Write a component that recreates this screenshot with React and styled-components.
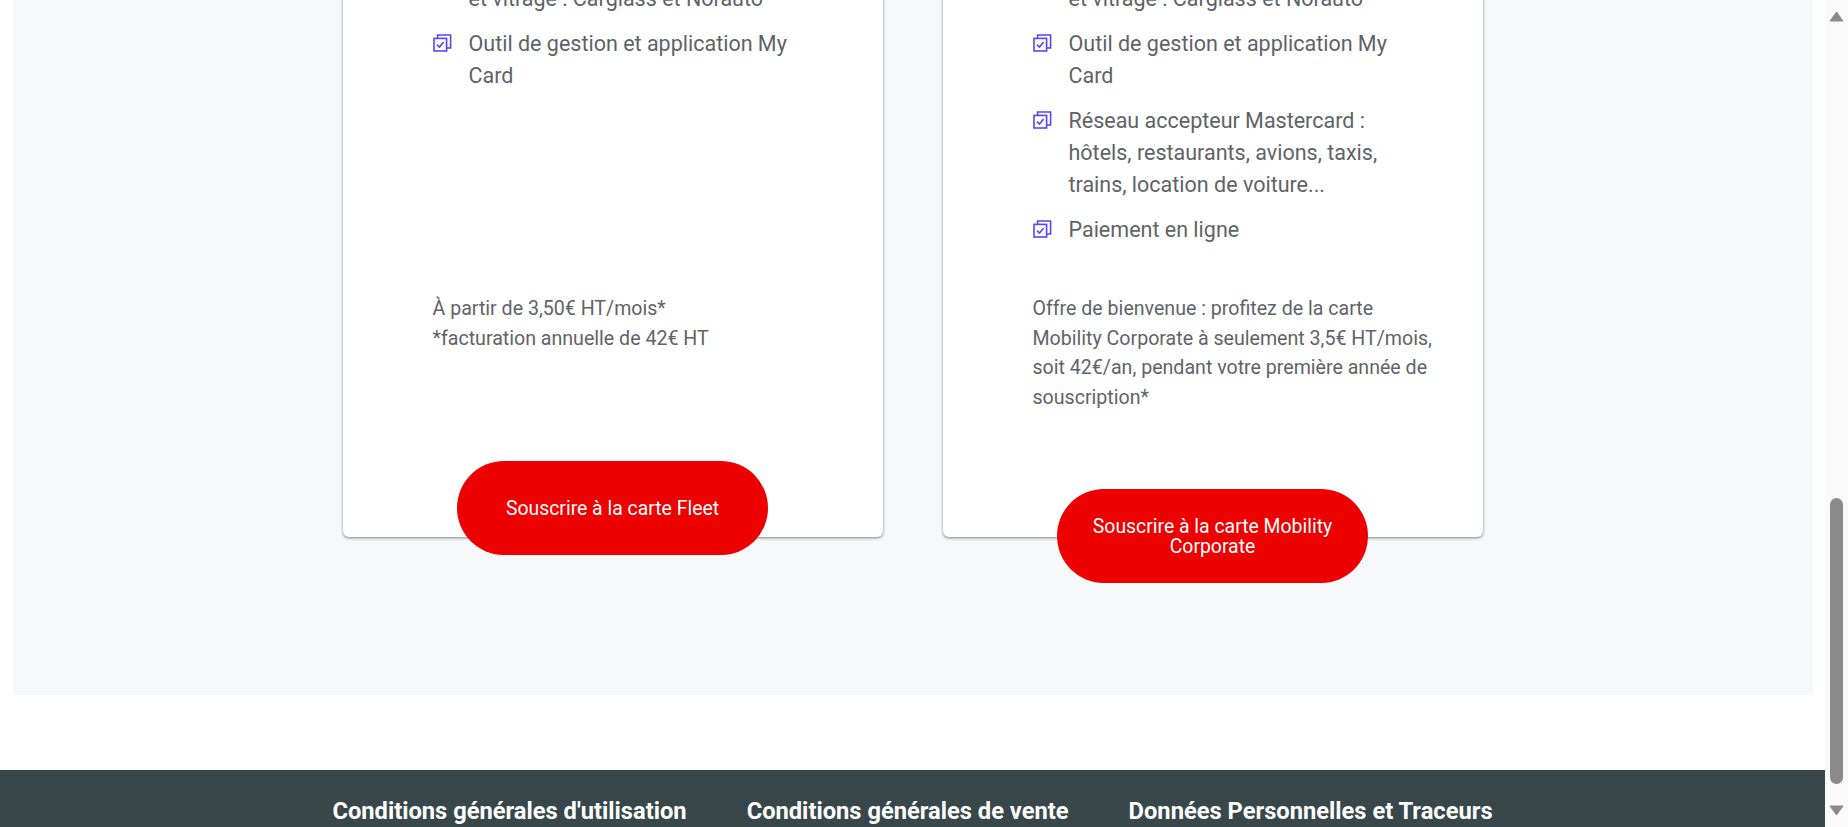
import React, { useLayoutEffect, useRef } from 'react';
import styled, { createGlobalStyle } from 'styled-components';

const GlobalStyle = createGlobalStyle`
  html, body {
    margin: 0;
    padding: 0;
    background: #ffffff;
    font-family: Roboto, "Liberation Sans", Arial, sans-serif;
    -webkit-font-smoothing: antialiased;
  }
  * { box-sizing: border-box; }
`;

const Page = styled.div`
  display: flex;
  flex-direction: column;
  min-height: 100vh;
  margin-right: 23px;
`;

const Header = styled.header`
  height: 88px;
  display: flex;
  align-items: center;
  justify-content: space-between;
  padding: 0 64px;
  border-bottom: 1px solid #e6e8eb;
`;

const Brand = styled.div`
  font-size: 26px;
  font-weight: 700;
  color: #37474a;
`;

const Nav = styled.nav`
  display: flex;
  gap: 36px;
  font-size: 17px;
  color: #37474a;
`;

const Hero = styled.section`
  min-height: 720px;
  padding: 120px 0 0;
  display: flex;
  flex-direction: column;
  align-items: center;
  text-align: center;
`;

const HeroTitle = styled.h1`
  margin: 0 0 24px;
  font-size: 44px;
  font-weight: 700;
  color: #37474a;
`;

const HeroText = styled.p`
  margin: 0;
  max-width: 760px;
  font-size: 20px;
  line-height: 32px;
  color: #5f6368;
`;

const Offers = styled.section`
  width: 100%;
  max-width: 1800px;
  margin: 0 auto 75px;
  padding: 80px 0 158px;
  background: #f7f8fa;
`;

const OffersTitle = styled.h2`
  margin: 0 0 60px;
  text-align: center;
  font-size: 34px;
  font-weight: 700;
  color: #37474a;
`;

const CardsRow = styled.div`
  display: grid;
  grid-template-columns: repeat(2, 540px);
  justify-content: center;
  gap: 60px;
`;

const Card = styled.article`
  display: flex;
  flex-direction: column;
  background: #ffffff;
  border-radius: 6px;
  box-shadow: 0 1px 3px rgba(40, 50, 55, 0.6);
  padding: 40px 45px 0 90px;
`;

const CardTitle = styled.h3`
  margin: 0 0 12px;
  font-size: 28px;
  line-height: 36px;
  font-weight: 700;
  color: #37474a;
`;

const CardSubtitle = styled.p`
  margin: 0 0 32px;
  font-size: 18px;
  line-height: 28px;
  color: #5f6368;
`;

const Features = styled.ul`
  list-style: none;
  margin: 0 0 48px;
  padding: 0 25px 0 0;
  min-height: 340px;
  display: flex;
  flex-direction: column;
  gap: 13px;
`;

const Feature = styled.li`
  display: grid;
  grid-template-columns: 36px 1fr;
  font-size: 21.5px;
  line-height: 32px;
  color: #5f6368;
`;

const IconBox = styled.span`
  display: flex;
  padding-top: 6px;
`;

const Price = styled.p`
  margin: 0 0 77px;
  font-size: 19.6px;
  line-height: 29.5px;
  color: #5f6368;
`;

const ButtonRow = styled.div`
  margin: auto -45px ${(p) => -p.$overhang}px -90px;
  display: flex;
  justify-content: center;
`;

const CtaButton = styled.button`
  width: 311px;
  height: 94px;
  padding: 2px 30px 0;
  border: none;
  border-radius: 47px;
  background: #ec0000;
  color: #ffffff;
  font-family: Roboto, "Liberation Sans", Arial, sans-serif;
  font-size: 19.4px;
  line-height: 20px;
  cursor: pointer;
`;

const Footer = styled.footer`
  background: #37474a;
  padding: 27px 0 34px;
  display: flex;
  flex-direction: column;
  align-items: center;
  gap: 36px;
`;

const FooterLinks = styled.div`
  display: flex;
  justify-content: center;
  gap: 60px;
`;

const FooterLink = styled.a`
  color: #ffffff;
  font-size: 23.7px;
  line-height: 28px;
  font-weight: 700;
  text-decoration: none;
`;

const Copyright = styled.div`
  color: #c9d0d2;
  font-size: 14px;
  line-height: 20px;
`;

const ScrollTrack = styled.aside`
  position: fixed;
  top: 0;
  right: 0;
  width: 23px;
  height: 100vh;
  background: #fafafa;
`;

const ScrollArrow = styled.svg`
  position: absolute;
  left: 4px;
  ${(p) => (p.$down ? 'bottom: 11px;' : 'top: 11px;')}
`;

const ScrollThumb = styled.div`
  position: absolute;
  left: 5px;
  top: 498px;
  width: 13px;
  height: 286px;
  border-radius: 7px;
  background: #8b8b8b;
`;

const CheckIcon = () => (
  <svg width="19" height="18" viewBox="0 0 19 18" fill="none" stroke="#5746f5" strokeWidth="1.6">
    <path d="M4.6 4.4 V1 H17.6 V14 H13.6" />
    <rect x="1" y="4.4" width="12.6" height="12.6" />
    <path d="M4 10.6 L6.5 13 L10.6 8" />
  </svg>
);

const Scrollbar = () => (
  <ScrollTrack aria-hidden="true">
    <ScrollArrow width="15" height="11" viewBox="0 0 15 11">
      <path d="M7.5 1 L14 10 H1 Z" fill="#8b8b8b" stroke="#8b8b8b" strokeLinejoin="round" />
    </ScrollArrow>
    <ScrollThumb />
    <ScrollArrow $down width="15" height="11" viewBox="0 0 15 11">
      <path d="M7.5 10 L14 1 H1 Z" fill="#8b8b8b" stroke="#8b8b8b" strokeLinejoin="round" />
    </ScrollArrow>
  </ScrollTrack>
);

const common = [
  'Réseau de 17 000 stations',
  <>Entretien, pneumatiques<br />et vitrage : Carglass et Norauto</>,
  'Outil de gestion et application My Card',
];

const cards = [
  {
    title: 'Carte Fleet',
    subtitle: 'La carte carburant pour vos véhicules',
    features: common,
    price: ['À partir de 3,50€ HT/mois*', <br key="b" />, '*facturation annuelle de 42€ HT'],
    cta: 'Souscrire à la carte Fleet',
    overhang: 18,
  },
  {
    title: 'Carte Mobility Corporate',
    subtitle: 'La carte pour tous vos déplacements',
    features: [
      ...common,
      'Réseau accepteur Mastercard : hôtels, restaurants, avions, taxis, trains, location de voiture...',
      'Paiement en ligne',
    ],
    price: [
      'Offre de bienvenue : profitez de la carte Mobility Corporate à seulement 3,5€ HT/mois, soit 42€/an, pendant votre première année de souscription*',
    ],
    cta: 'Souscrire à la carte Mobility Corporate',
    overhang: 46,
  },
];

export default function App() {
  const offersRef = useRef(null);

  useLayoutEffect(() => {
    const align = () => {
      const el = offersRef.current;
      if (!el) return;
      const r = el.getBoundingClientRect();
      window.scrollTo(0, window.scrollY + r.bottom - 695);
    };
    align();
    if (document.fonts && document.fonts.ready) document.fonts.ready.then(align);
    window.addEventListener('load', align);
    return () => window.removeEventListener('load', align);
  }, []);

  return (
    <>
      <GlobalStyle />
      <Page>
        <Header>
          <Brand>Cartes carburant</Brand>
          <Nav>
            <span>Nos offres</span>
            <span>Services</span>
            <span>Contact</span>
          </Nav>
        </Header>
        <Hero>
          <HeroTitle>Des cartes adaptées à votre activité</HeroTitle>
          <HeroText>
            Simplifiez la gestion des dépenses de mobilité de vos collaborateurs avec nos cartes
            professionnelles.
          </HeroText>
        </Hero>
        <Offers ref={offersRef}>
          <OffersTitle>Choisissez votre carte</OffersTitle>
          <CardsRow>
            {cards.map((c) => (
              <Card key={c.title}>
                <CardTitle>{c.title}</CardTitle>
                <CardSubtitle>{c.subtitle}</CardSubtitle>
                <Features>
                  {c.features.map((f, i) => (
                    <Feature key={i}>
                      <IconBox>
                        <CheckIcon />
                      </IconBox>
                      <span>{f}</span>
                    </Feature>
                  ))}
                </Features>
                <Price>{c.price}</Price>
                <ButtonRow $overhang={c.overhang}>
                  <CtaButton>{c.cta}</CtaButton>
                </ButtonRow>
              </Card>
            ))}
          </CardsRow>
        </Offers>
        <Footer>
          <FooterLinks>
            <FooterLink href="#">Conditions générales d'utilisation</FooterLink>
            <FooterLink href="#">Conditions générales de vente</FooterLink>
            <FooterLink href="#">Données Personnelles et Traceurs</FooterLink>
          </FooterLinks>
          <Copyright>© 2024 – Tous droits réservés</Copyright>
        </Footer>
      </Page>
      <Scrollbar />
    </>
  );
}
